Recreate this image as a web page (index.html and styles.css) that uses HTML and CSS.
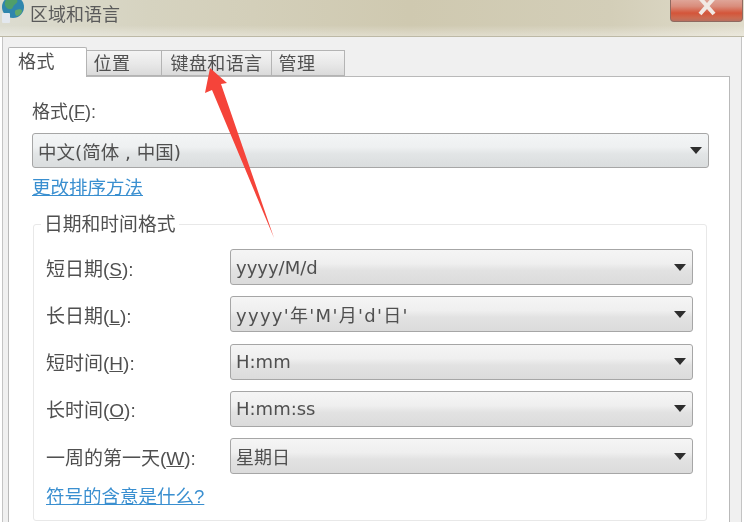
FILE: index.html
```html
<html lang="zh-CN">
<head>
    <meta charset="UTF-8">
    <title>区域和语言</title>
    <link rel="stylesheet" href="styles.css">
</head>
<body>
    <div class="window">
        <div class="titlebar">
            <svg class="globe" width="24" height="28" viewBox="0 0 24 28">
                <circle cx="12" cy="10" r="11" fill="#2f86ad"/>
                <path d="M5 3c4-3 9-3 11 0s-3 4-4 7-5 3-7 0-1-5 0-7z" fill="#4f9e6a"/>
                <path d="M15 13c3-1 6-1 6 1s-3 5-5 5-3-5-1-6z" fill="#62a86a"/>
                <rect x="1" y="16" width="8" height="10" rx="1" fill="#e3e8ee"/>
            </svg>
            <span class="title">区域和语言</span>
            <div class="close">
                <svg width="22" height="16" viewBox="0 0 22 16">
                    <path d="M4 -2L18 14M18 -2L4 14" stroke="#f1e9e4" stroke-width="4" fill="none"/>
                </svg>
            </div>
        </div>
        <div class="dialog">
            <div class="tabs">
                <div class="tab active">格式</div>
                <div class="tab tab-place">位置</div>
                <div class="tab tab-keys">键盘和语言</div>
                <div class="tab tab-admin">管理</div>
            </div>
            <div class="pane">
                <div class="field-label">格式(<u>F</u>):</div>
                <div class="select wide">
                    <span class="cjk-value">中文(简体 , 中国)</span>
                    <i class="caret"></i>
                </div>
                <a class="link sort-link">更改排序方法</a>
                <div class="group">
                    <div class="legend">日期和时间格式</div>
                    <div class="row">
                        <label>短日期(<u>S</u>):</label>
                        <div class="select"><span>yyyy/M/d</span><i class="caret"></i></div>
                    </div>
                    <div class="row">
                        <label>长日期(<u>L</u>):</label>
                        <div class="select"><span class="spaced">yyyy'年'M'月'd'日'</span><i class="caret"></i></div>
                    </div>
                    <div class="row">
                        <label>短时间(<u>H</u>):</label>
                        <div class="select"><span>H:mm</span><i class="caret"></i></div>
                    </div>
                    <div class="row">
                        <label>长时间(<u>O</u>):</label>
                        <div class="select"><span>H:mm:ss</span><i class="caret"></i></div>
                    </div>
                    <div class="row">
                        <label>一周的第一天(<u>W</u>):</label>
                        <div class="select"><span>星期日</span><i class="caret"></i></div>
                    </div>
                    <a class="link symbol-link">符号的含意是什么?</a>
                </div>
            </div>
        </div>
    </div>

    <!-- Red annotation arrow on top of the dialog -->
    <svg class="arrow" width="744" height="522" viewBox="0 0 744 522">
        <path d="M210 68L227 83L221 84L274 238L212 90L205 93Z" fill="#f5443a"/>
    </svg>
</body>
</html>
```

FILE: styles.css
```css
html, body {
    margin: 0;
    height: 100%;
    overflow: hidden;
}

body {
    font-family: "Liberation Sans", "Noto Sans CJK SC", sans-serif;
    font-size: 18px;
    color: #505050;
    background-color: #ffffff;
    position: relative;
}

.window {
    height: 522px;
    display: flex;
    flex-direction: column;
    filter: blur(0.7px);
}

.titlebar {
    height: 37px;
    flex: none;
    display: flex;
    align-items: flex-start;
    background:
        linear-gradient(180deg, rgba(255, 255, 255, 0) 70%, rgba(255, 255, 255, 0.35) 100%),
        linear-gradient(90deg, #dcdcd0 0%, #d6d3c0 20%, #cfc9b0 55%, #d3ceb8 82%, #e0dccb 100%);
    border-bottom: 1px solid #bdb9a6;
    box-sizing: border-box;
}

.globe {
    margin: -3px 0 0 1px;
    flex: none;
}

.title {
    margin: 0 0 0 5px;
    font-size: 18px;
    line-height: 30px;
    color: #5a5a5a;
}

.close {
    margin-left: auto;
    margin-right: 1px;
    width: 73px;
    height: 22px;
    border: 1px solid #8f6a60;
    border-top: none;
    border-radius: 0 0 4px 4px;
    box-sizing: border-box;
    background: linear-gradient(180deg, #dfa598 0%, #d98d7c 30%, #d4553a 62%, #cc6a50 85%, #b9705f 100%);
    display: flex;
    justify-content: center;
}

.dialog {
    flex: 1;
    margin-left: 2px;
    margin-right: 2px;
    padding: 10px 11px 0 5px;
    background-color: #f0f0f0;
    border-left: 1px solid #c4c4c4;
    border-right: 1px solid #c4c4c4;
    display: flex;
    flex-direction: column;
    min-height: 0;
}

.tabs {
    display: flex;
    align-items: flex-end;
    height: 29px;
    flex: none;
    position: relative;
    z-index: 1;
}

.tab {
    height: 26px;
    box-sizing: border-box;
    border: 1px solid #b4b4b4;
    border-left: none;
    background: linear-gradient(180deg, #f4f4f4 0%, #e8e8e8 55%, #dadada 100%);
    font-size: 18px;
    line-height: 26px;
    letter-spacing: 0.4px;
    text-align: center;
}

.tab.active {
    width: 79px;
    height: 30px;
    margin-bottom: -1px;
    border-left: 1px solid #b4b4b4;
    border-bottom: none;
    border-radius: 2px 2px 0 0;
    background: #ffffff;
    line-height: 28px;
    padding-right: 22px;
}

.tab-place {
    width: 75px;
    padding-right: 24px;
}

.tab-keys {
    width: 110px;
}

.tab-admin {
    width: 73px;
    padding-right: 22px;
}

.pane {
    flex: 1;
    min-height: 0;
    background-color: #ffffff;
    border: 1px solid #b9b9b9;
    border-bottom: none;
    padding: 23px 20px 0 23px;
    display: flex;
    flex-direction: column;
}

.field-label {
    height: 24px;
    line-height: 24px;
}

.select {
    height: 36px;
    flex: 1;
    box-sizing: border-box;
    border: 1px solid #a6a6a6;
    border-radius: 3px;
    background: linear-gradient(180deg, #f5f5f5 0%, #efefef 40%, #e2e2e2 60%, #dbdbdb 100%);
    display: flex;
    align-items: center;
    justify-content: space-between;
    padding: 0 6px 0 5px;
    font-family: "DejaVu Sans", "Noto Sans CJK SC", sans-serif;
    font-size: 18px;
}

.select.wide {
    flex: none;
    height: 35px;
    margin-top: 9px;
    background: linear-gradient(180deg, #f3f5f6 0%, #eef0f1 40%, #e2e5e6 60%, #dadddE 100%);
}

.cjk-value {
    font-size: 18.5px;
}

.spaced {
    letter-spacing: 1.3px;
}

.caret {
    width: 0;
    height: 0;
    border-left: 6px solid transparent;
    border-right: 6px solid transparent;
    border-top: 7px solid #2e2e2e;
    flex: none;
}

.link {
    color: #3a8fd0;
    font-size: 18.5px;
    text-decoration: underline;
}

.sort-link {
    margin-top: 8px;
    line-height: 24px;
}

.group {
    position: relative;
    margin: 24px 2px 0 1px;
    border: 1px solid #e8e8e8;
    border-radius: 3px;
    height: 297px;
    box-sizing: border-box;
    padding: 24px 13px 0 12px;
    display: flex;
    flex-direction: column;
}

.legend {
    position: absolute;
    top: -11px;
    left: 7px;
    padding: 0 4px 0 3px;
    background-color: #ffffff;
    font-size: 18.8px;
    line-height: 22px;
}

.row {
    display: flex;
    align-items: center;
    margin-bottom: 11.25px;
    font-size: 19px;
}

.row label {
    width: 184px;
    flex: none;
}

.symbol-link {
    line-height: 24px;
}

.arrow {
    position: absolute;
    left: 0;
    top: 0;
    filter: blur(0.5px);
}
```
